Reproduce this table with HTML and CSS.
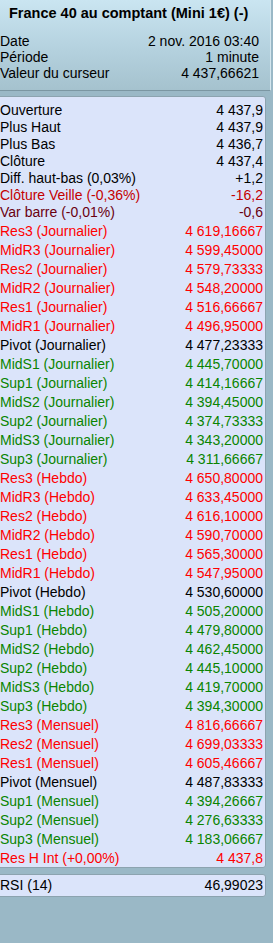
FILE: index.html
```html
<!DOCTYPE html>
<html lang="fr">
<head>
<meta charset="utf-8">
<title>France 40</title>
<link rel="stylesheet" href="styles.css">
</head>
<body>
<div class="page">
  <header class="head">
    <div class="title">France 40 au comptant (Mini 1€) (-)</div>
    <div class="hrow"><span>Date</span><span>2 nov. 2016 03:40</span></div>
    <div class="hrow"><span>Période</span><span>1 minute</span></div>
    <div class="hrow"><span>Valeur du curseur</span><span>4 437,66621</span></div>
  </header>

  <section class="box main">
    <div class="row s"><span>Ouverture</span><span>4 437,9</span></div>
    <div class="row s"><span>Plus Haut</span><span>4 437,9</span></div>
    <div class="row s"><span>Plus Bas</span><span>4 436,7</span></div>
    <div class="row s"><span>Clôture</span><span>4 437,4</span></div>
    <div class="row s"><span>Diff. haut-bas (0,03%)</span><span>+1,2</span></div>
    <div class="row s dred"><span>Clôture Veille (-0,36%)</span><span>-16,2</span></div>
    <div class="row s maroon"><span>Var barre (-0,01%)</span><span>-0,6</span></div>
    <div class="lvls">
      <div class="row red"><span>Res3 (Journalier)</span><span>4 619,16667</span></div>
      <div class="row red"><span>MidR3 (Journalier)</span><span>4 599,45000</span></div>
      <div class="row red"><span>Res2 (Journalier)</span><span>4 579,73333</span></div>
      <div class="row red"><span>MidR2 (Journalier)</span><span>4 548,20000</span></div>
      <div class="row red"><span>Res1 (Journalier)</span><span>4 516,66667</span></div>
      <div class="row red"><span>MidR1 (Journalier)</span><span>4 496,95000</span></div>
      <div class="row"><span>Pivot (Journalier)</span><span>4 477,23333</span></div>
      <div class="row green"><span>MidS1 (Journalier)</span><span>4 445,70000</span></div>
      <div class="row green"><span>Sup1 (Journalier)</span><span>4 414,16667</span></div>
      <div class="row green"><span>MidS2 (Journalier)</span><span>4 394,45000</span></div>
      <div class="row green"><span>Sup2 (Journalier)</span><span>4 374,73333</span></div>
      <div class="row green"><span>MidS3 (Journalier)</span><span>4 343,20000</span></div>
      <div class="row green"><span>Sup3 (Journalier)</span><span>4 311,66667</span></div>
      <div class="row red"><span>Res3 (Hebdo)</span><span>4 650,80000</span></div>
      <div class="row red"><span>MidR3 (Hebdo)</span><span>4 633,45000</span></div>
      <div class="row red"><span>Res2 (Hebdo)</span><span>4 616,10000</span></div>
      <div class="row red"><span>MidR2 (Hebdo)</span><span>4 590,70000</span></div>
      <div class="row red"><span>Res1 (Hebdo)</span><span>4 565,30000</span></div>
      <div class="row red"><span>MidR1 (Hebdo)</span><span>4 547,95000</span></div>
      <div class="row"><span>Pivot (Hebdo)</span><span>4 530,60000</span></div>
      <div class="row green"><span>MidS1 (Hebdo)</span><span>4 505,20000</span></div>
      <div class="row green"><span>Sup1 (Hebdo)</span><span>4 479,80000</span></div>
      <div class="row green"><span>MidS2 (Hebdo)</span><span>4 462,45000</span></div>
      <div class="row green"><span>Sup2 (Hebdo)</span><span>4 445,10000</span></div>
      <div class="row green"><span>MidS3 (Hebdo)</span><span>4 419,70000</span></div>
      <div class="row green"><span>Sup3 (Hebdo)</span><span>4 394,30000</span></div>
      <div class="row red"><span>Res3 (Mensuel)</span><span>4 816,66667</span></div>
      <div class="row red"><span>Res2 (Mensuel)</span><span>4 699,03333</span></div>
      <div class="row red"><span>Res1 (Mensuel)</span><span>4 605,46667</span></div>
      <div class="row"><span>Pivot (Mensuel)</span><span>4 487,83333</span></div>
      <div class="row green"><span>Sup1 (Mensuel)</span><span>4 394,26667</span></div>
      <div class="row green"><span>Sup2 (Mensuel)</span><span>4 276,63333</span></div>
      <div class="row green"><span>Sup3 (Mensuel)</span><span>4 183,06667</span></div>
      <div class="row red"><span>Res H Int (+0,00%)</span><span>4 437,8</span></div>
    </div>
  </section>

  <section class="box rsi">
    <div class="row s"><span>RSI (14)</span><span>46,99023</span></div>
  </section>
</div>
</body>
</html>
```

FILE: styles.css
```css
html, body {
  margin: 0;
  padding: 0;
  background: #9ab8c6;
  height: 100%;
}
body {
  font-family: "Liberation Sans", Arial, sans-serif;
  font-size: 14px;
  color: #000;
}
.page {
  width: 273px;
  height: 943px;
  overflow: hidden;
  background: #9ab8c6;
}
.head {
  margin-left: -6px;
  width: 277px;
  height: 91px;
  box-sizing: border-box;
  background: linear-gradient(to bottom, #cae5f1 0%, #b6d3e0 50%, #a5c2ce 100%);
  border-bottom: 1px solid #7b96a2;
  border-right: 1px solid #d4e6ee;
  padding: 5px 11px 0 6px;
}
.head + .box { margin-top: 5px; }
.title {
  font-weight: bold;
  font-size: 14.5px;
  padding-left: 9px;
  height: 17px;
  line-height: 17px;
  margin-bottom: 11px;
  white-space: nowrap;
}
.hrow {
  display: flex;
  justify-content: space-between;
  height: 16px;
  line-height: 16px;
  white-space: nowrap;
}
.box {
  margin-left: -6px;
  width: 272px;
  box-sizing: border-box;
  background: #dbe4fa;
  border: 1px solid #8ca3af;
  border-radius: 3px;
  padding: 0 2px 0 5px;
}
.main {
  padding-top: 5px;
  height: 772px;
}
.rsi {
  margin-top: 6px;
  padding-top: 2px;
  height: 23px;
}
.row {
  display: flex;
  justify-content: space-between;
  height: 19px;
  line-height: 19px;
  white-space: nowrap;
}
.row.s {
  height: 17px;
  line-height: 17px;
}
.lvls { padding-top: 1px; }
.dred { color: #c40000; }
.maroon { color: #6a0010; }
.red { color: #ff0000; }
.green { color: #0a8400; }
```
